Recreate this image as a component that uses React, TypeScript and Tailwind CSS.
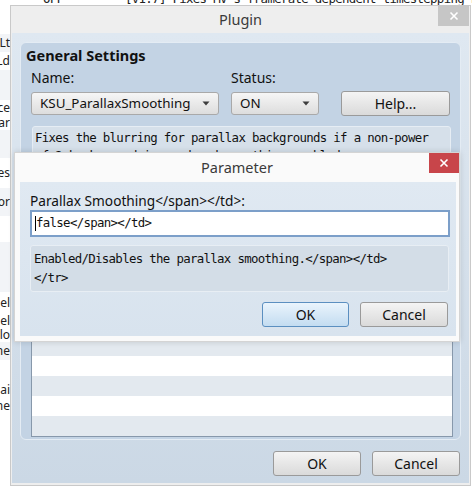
import React from "react";

const mono = {
  fontFamily: '"DejaVu Sans Mono", "Liberation Mono", monospace',
  fontSize: "12.4px",
  letterSpacing: "-0.68px",
};
const sans = { fontFamily: '"Noto Sans", "Open Sans", Arial, sans-serif' };

// Rows of the editor list that sits behind the dialogs; only their clipped tails show.
const backRows: { h: number; t: string; bg: string }[] = [
  { h: 34, t: "", bg: "bg-white" },
  { h: 18, t: "Lt", bg: "bg-[#f2f4f7]" },
  { h: 18, t: "Ld", bg: "bg-white" },
  { h: 30, t: "", bg: "bg-[#f2f4f7]" },
  { h: 16, t: "ce", bg: "bg-white" },
  { h: 14, t: "ar", bg: "bg-white" },
  { h: 28, t: "", bg: "bg-[#f2f4f7]" },
  { h: 30, t: "es", bg: "bg-white" },
  { h: 28, t: "or", bg: "bg-[#f2f4f7]" },
  { h: 26, t: "", bg: "bg-white" },
  { h: 50, t: "", bg: "bg-[#f2f4f7]" },
  { h: 22, t: "el", bg: "bg-white" },
  { h: 14, t: "el", bg: "bg-white" },
  { h: 14, t: "lo", bg: "bg-white" },
  { h: 18, t: "ne", bg: "bg-[#f2f4f7]" },
  { h: 22, t: "", bg: "bg-white" },
  { h: 16, t: "ai", bg: "bg-white" },
  { h: 16, t: "ne", bg: "bg-white" },
  { h: 100, t: "", bg: "bg-white" },
];

function CloseGlyph() {
  return (
    <svg width="10" height="10" viewBox="0 0 10 10">
      <path d="M1.5 1.5 L8.5 8.5 M8.5 1.5 L1.5 8.5" stroke="#ffffff" strokeWidth="1.6" />
    </svg>
  );
}

function Arrow() {
  return (
    <svg width="8" height="5" viewBox="0 0 8 5">
      <path d="M0.5 0.5 H7.5 L4 4.5 Z" fill="#3d3d3d" />
    </svg>
  );
}

function Select({ w, label }: { w: string; label: string }) {
  return (
    <div
      className={`${w} h-[23px] flex items-center justify-between pl-[8px] pr-[8px] rounded-[3px] border border-[#a9a9a9] bg-gradient-to-b from-[#f6f6f6] to-[#dddddd] text-[13.4px] text-[#111]`}
      style={sans}
    >
      <span className="leading-none">{label}</span>
      <Arrow />
    </div>
  );
}

function Btn({ w, label, primary }: { w: string; label: string; primary?: boolean }) {
  return (
    <div
      className={`${w} h-[25px] flex items-center justify-center rounded-[3px] border text-[14px] text-[#111] ${
        primary
          ? "border-[#5b8fc0] bg-gradient-to-b from-[#eaf4fc] to-[#c3dcf1]"
          : "border-[#9a9a9a] bg-gradient-to-b from-[#f4f4f4] to-[#dadada]"
      }`}
      style={sans}
    >
      {label}
    </div>
  );
}

export default function App() {
  const listRows = Array.from({ length: 12 }, (_, i) => i);
  return (
    <div className="relative w-[472px] h-[487px] overflow-hidden bg-white">
      {/* plugin manager list behind the dialogs */}
      <div className="flex flex-col w-[10px] overflow-hidden">
        {backRows.map((r, i) => (
          <div
            key={i}
            className={`${r.bg} flex items-center justify-end whitespace-nowrap text-[12px] leading-none text-[#222]`}
            style={{ ...sans, height: r.h }}
          >
            {r.t}
          </div>
        ))}
      </div>
      <div className="absolute left-[43px] top-[-10px] flex whitespace-nowrap text-[#222]" style={mono}>
        <span className="w-[82px]">OFF</span>
        <span>[v1.7] Fixes MV's framerate dependent timestepping F</span>
      </div>

      {/* Plugin window */}
      <div className="absolute left-[10px] top-[5px] w-[461px] h-[481px] flex flex-col bg-[#eeeeee] border border-[#c9c9c9]">
        <div className="relative h-[27px] flex items-center justify-center shrink-0">
          <span className="text-[14.5px] text-[#3a3a3a]" style={sans}>
            Plugin
          </span>
          <div className="absolute right-[1px] top-[-1px] w-[31px] h-[21px] bg-[#c6c6c6] flex items-center justify-center">
            <CloseGlyph />
          </div>
        </div>
        <div className="flex-1 mx-[1px] mb-[2px] flex flex-col bg-gradient-to-b from-[#dfe8f1] to-[#cbd8e5] pl-[8px] pr-[8px] pt-[9px]">
          {/* General Settings group */}
          <div className="w-[441px] h-[398px] flex flex-col rounded-[6px] border border-[#e4ecf4] bg-[#c3d3e4] pl-[10px] pt-[2px]">
            <div className="h-[22px] -ml-[5px] flex items-center text-[14.5px] font-bold text-[#111]" style={sans}>
              General Settings
            </div>
            <div className="h-[21px] flex items-end text-[14px] text-[#111]" style={sans}>
              <span className="w-[200px]">Name:</span>
              <span>Status:</span>
            </div>
            <div className="mt-[3px] flex items-center">
              <Select w="w-[188px]" label="KSU_ParallaxSmoothing" />
              <div className="w-[12px]" />
              <Select w="w-[88px]" label="ON" />
              <div className="w-[22px]" />
              <Btn w="w-[109px]" label="Help..." />
            </div>
            <div
              className="mt-[10px] ml-[1px] w-[419px] h-[59px] rounded-[3px] border border-[#e6edf4] bg-[#d6e0ea] px-[2px] pt-[2px] leading-[18px] text-[#111]"
              style={mono}
            >
              Fixes the blurring for parallax backgrounds if a non-power
              <br />
              of 2 background is used and smoothing enabled.
            </div>
            <div className="mt-[10px] w-[422px] h-[242px] flex flex-col border border-[#8798ab] overflow-hidden">
              {listRows.map((i) => (
                <div key={i} className={`h-[20px] shrink-0 ${i % 2 === 0 ? "bg-white" : "bg-[#e3e9ef]"}`} />
              ))}
            </div>
          </div>
          <div className="mt-[11px] flex justify-end pr-[1px] gap-[11px]">
            <Btn w="w-[88px]" label="OK" />
            <Btn w="w-[88px]" label="Cancel" />
          </div>
        </div>
      </div>

      {/* Parameter dialog */}
      <div className="absolute left-[14px] top-[152px] w-[446px] h-[190px] flex flex-col bg-[#fafafa] border border-[#d4d4d4] shadow-[0_0_6px_rgba(0,0,0,0.15)]">
        <div className="relative h-[29px] shrink-0 flex items-center justify-center">
          <span className="text-[14.5px] text-[#3a3a3a]" style={sans}>
            Parameter
          </span>
          <div className="absolute right-[0px] top-[0px] w-[30px] h-[20px] bg-[#c8454a] flex items-center justify-center">
            <CloseGlyph />
          </div>
        </div>
        <div className="flex-1 ml-[5px] mr-[3px] mb-[5px] flex flex-col bg-gradient-to-b from-[#e0e9f2] to-[#d8e3ee] pl-[10px] pt-[10px]">
          <div className="h-[18px] flex items-center text-[13.7px] text-[#111]" style={sans}>
            Parallax Smoothing&lt;/span&gt;&lt;/td&gt;:
          </div>
          <div className="w-[420px] h-[27px] flex items-center border-2 border-[#7c9fc9] bg-white pl-[3px]">
            <div className="w-px h-[15px] bg-black" />
            <span className="text-[#111]" style={mono}>
              false&lt;/span&gt;&lt;/td&gt;
            </span>
          </div>
          <div
            className="mt-[8px] w-[419px] h-[47px] rounded-[3px] border border-[#e8eef4] bg-[#d3dde7] pl-[3px] pt-[3px] leading-[19px] text-[#111]"
            style={mono}
          >
            Enabled/Disables the parallax smoothing.&lt;/span&gt;&lt;/td&gt;
            <br />
            &lt;/tr&gt;
          </div>
          <div className="mt-[10px] flex justify-end pr-[8px] gap-[11px]">
            <Btn w="w-[87px]" label="OK" primary />
            <Btn w="w-[88px]" label="Cancel" />
          </div>
        </div>
      </div>
    </div>
  );
}
